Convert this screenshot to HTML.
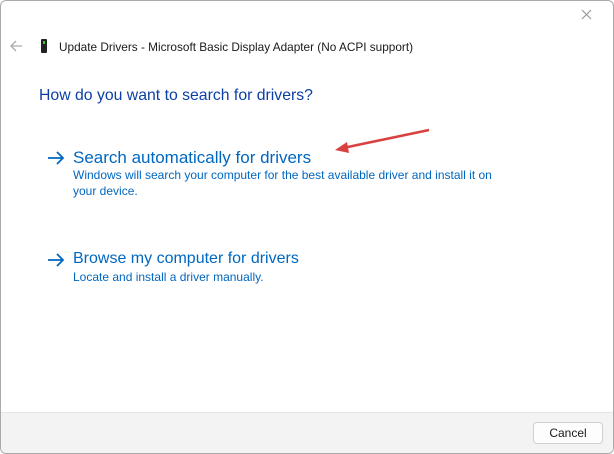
<!DOCTYPE html>
<html><head><style>
body{margin:0;width:614px;height:454px;overflow:hidden;background:#fff;font-family:"Liberation Sans",sans-serif;position:relative}
.w{position:absolute;left:0;top:0;width:612px;height:452px;border:1px solid #aaa;border-radius:6px;background:#fff;overflow:hidden}
.t{position:absolute;font-size:12px;color:#1a1a1a;white-space:nowrap}
.h{position:absolute;left:38px;top:86px;font-size:15.8px;color:#0b3fa6}
.a{position:absolute;font-size:16.5px;color:#0067c0;white-space:nowrap}
.d{position:absolute;font-size:12px;color:#0067c0;line-height:16px}
.f{position:absolute;left:0;top:411px;width:614px;height:43px;background:#f3f3f3;border-top:1px solid #e5e5e5}
.b{position:absolute;left:532px;top:421px;width:68px;height:20px;border:1px solid #d0d0d0;border-radius:4px;background:#fdfdfd;font-size:12px;text-align:center;line-height:20px;color:#1a1a1a}
</style></head><body><div class="w">
<svg style="position:absolute;left:0;top:0" width="614" height="454">
<path d="M581 9l9 9M590 9l-9 9" stroke="#999" stroke-width="1.2"/>
<path d="M21 45H10M15 40l-5 5 5 5" stroke="#aaa" stroke-width="1.3" fill="none"/>
<path d="M47 157H62M56 151l6 6-6 6" stroke="#0067c0" stroke-width="1.8" fill="none"/>
<path d="M47 259H62M56 253l6 6-6 6" stroke="#0067c0" stroke-width="1.8" fill="none"/>
<line x1="428" y1="129" x2="342" y2="147" stroke="#d94040" stroke-width="2.5"/><polygon points="334,149 346,141 348,152" fill="#d94040"/>
</svg>
<div style="position:absolute;left:40px;top:38px;width:6px;height:14px;background:#222;border-radius:1px"><div style="position:absolute;left:2px;top:2px;width:2px;height:3px;background:#3c3"></div></div>
<div class="t" style="left:58px;top:39px;font-size:11.8px">Update Drivers - Microsoft Basic Display Adapter (No ACPI support)</div>
<div class="h">How do you want to search for drivers?</div>
<div class="a" style="left:72px;top:147px;font-size:17px">Search automatically for drivers</div>
<div class="d" style="left:72px;top:166px">Windows will search your computer for the best available driver and install it on<br>your device.</div>
<div class="a" style="left:72px;top:249px;font-size:16px">Browse my computer for drivers</div>
<div class="d" style="left:72px;top:268px">Locate and install a driver manually.</div>
<div class="f"></div><div class="b">Cancel</div>
</div></body></html>
